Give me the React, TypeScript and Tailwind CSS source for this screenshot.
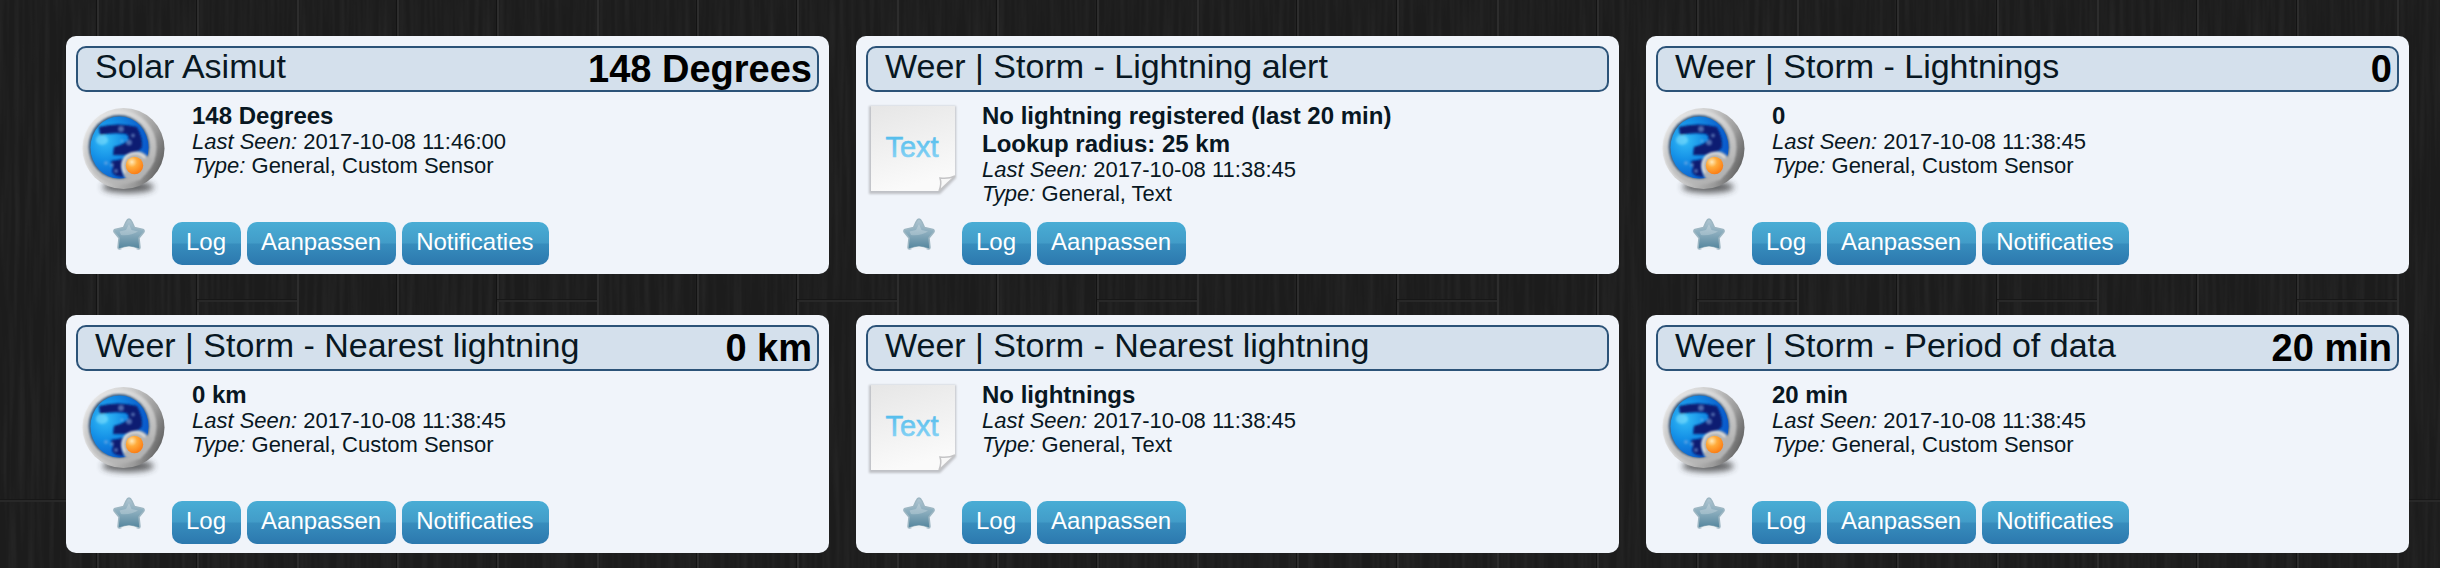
import React from "react";

type Kind = "custom" | "text";

interface Device {
  name: string;
  value?: string;
  status: string[];
  seen: string;
  type: string;
  kind: Kind;
}

const devices: Device[] = [
  { name: "Solar Asimut", value: "148 Degrees", status: ["148 Degrees"], seen: "2017-10-08 11:46:00", type: "General, Custom Sensor", kind: "custom" },
  { name: "Weer | Storm - Lightning alert", status: ["No lightning registered (last 20 min)", "Lookup radius: 25 km"], seen: "2017-10-08 11:38:45", type: "General, Text", kind: "text" },
  { name: "Weer | Storm - Lightnings", value: "0", status: ["0"], seen: "2017-10-08 11:38:45", type: "General, Custom Sensor", kind: "custom" },
  { name: "Weer | Storm - Nearest lightning", value: "0 km", status: ["0 km"], seen: "2017-10-08 11:38:45", type: "General, Custom Sensor", kind: "custom" },
  { name: "Weer | Storm - Nearest lightning", status: ["No lightnings"], seen: "2017-10-08 11:38:45", type: "General, Text", kind: "text" },
  { name: "Weer | Storm - Period of data", value: "20 min", status: ["20 min"], seen: "2017-10-08 11:38:45", type: "General, Custom Sensor", kind: "custom" },
];

function Defs() {
  return (
    <svg width="0" height="0" className="absolute" aria-hidden="true">
      <defs>
        <linearGradient id="ring" x1="0" y1="0.2" x2="1" y2="0.6">
          <stop offset="0" stopColor="#f0f0f0" />
          <stop offset="0.45" stopColor="#cccccc" />
          <stop offset="0.8" stopColor="#9a9a9a" />
          <stop offset="1" stopColor="#666666" />
        </linearGradient>
        <linearGradient id="face" x1="0.2" y1="0" x2="0.7" y2="1">
          <stop offset="0" stopColor="#e6e6e6" />
          <stop offset="0.5" stopColor="#c9c9c9" />
          <stop offset="1" stopColor="#aeaeae" />
        </linearGradient>
        <radialGradient id="sea" cx="0.25" cy="0.38" r="0.72">
          <stop offset="0" stopColor="#34bdf8" />
          <stop offset="0.45" stopColor="#148fe6" />
          <stop offset="1" stopColor="#0a5acb" />
        </radialGradient>
        <radialGradient id="sun" cx="0.35" cy="0.3" r="0.75">
          <stop offset="0" stopColor="#ffe9b8" />
          <stop offset="0.4" stopColor="#ffac3c" />
          <stop offset="1" stopColor="#fb7a12" />
        </radialGradient>
        <filter id="soft" x="-20%" y="-50%" width="140%" height="200%">
          <feGaussianBlur stdDeviation="3" />
        </filter>
        <filter id="blurS">
          <feGaussianBlur stdDeviation="0.8" />
        </filter>
        <linearGradient id="page" x1="0" y1="0" x2="0.3" y2="1">
          <stop offset="0" stopColor="#e6e6e6" />
          <stop offset="1" stopColor="#fafafa" />
        </linearGradient>
        <linearGradient id="letters" x1="0" y1="0" x2="0" y2="1">
          <stop offset="0" stopColor="#48b8ea" />
          <stop offset="1" stopColor="#90d6f6" />
        </linearGradient>
        <linearGradient id="star" x1="0" y1="0" x2="0" y2="1">
          <stop offset="0" stopColor="#b0c6d2" />
          <stop offset="0.5" stopColor="#87aabb" />
          <stop offset="1" stopColor="#53859d" />
        </linearGradient>
      </defs>
    </svg>
  );
}

function CustomIcon() {
  return (
    <svg viewBox="0 0 96 96" className="size-24" role="img" aria-label="Custom sensor">
      <ellipse cx="52" cy="83" rx="26" ry="6" fill="#333" opacity="0.75" filter="url(#soft)" />
      <ellipse cx="47.500" cy="44.500" rx="41" ry="40.500" fill="url(#ring)" />
      <ellipse cx="44" cy="43.500" rx="36.500" ry="37" fill="url(#face)" filter="url(#blurS)" />
      <ellipse cx="43" cy="43" rx="30.500" ry="32" fill="#3f5f80" filter="url(#blurS)" />
      <ellipse cx="43.500" cy="43.500" rx="29" ry="31" fill="url(#sea)" />
      <g filter="url(#blurS)">
        <path d="M23 23 Q42 18 61 23 Q67 34 66 43 Q62 50 50 51 L37 51 L38 43 Q46 41 52 37 Q54 32 50 30 Q38 28 24 31 Z" fill="#071a72" />
        <path d="M35 57 L48 55 Q44 64 48 73 L41 72 Q34 69 37 64 Z" fill="#071a72" />
        <ellipse cx="26" cy="36" rx="6" ry="5" fill="#7fdcfb" opacity="0.6" />
      </g>
      <g fill="#8fb4e6" opacity="0.5" filter="url(#blurS)">
        <circle cx="45" cy="25" r="3" />
        <circle cx="53" cy="38.500" r="3" />
        <circle cx="46" cy="37" r="1.500" />
        <circle cx="57" cy="31.500" r="2" />
        <circle cx="30" cy="59" r="2" />
        <circle cx="36" cy="61" r="2" />
        <circle cx="40" cy="67" r="2" />
      </g>
      <g filter="url(#blurS)">
        <path d="M58 48 Q66 46 71 52 L78 56 L64 76 L50 75 Q45 68 46 61 Q48 50 58 48 Z" fill="#b3b3b3" />
        <path d="M49 69 A12.500 12.500 0 0 1 69 54" fill="none" stroke="#dedede" strokeWidth="2.500" />
      </g>
      <circle cx="58.500" cy="61.500" r="8.700" fill="url(#sun)" />
    </svg>
  );
}

function TextIcon() {
  return (
    <svg viewBox="0 0 96 96" className="size-24" role="img" aria-label="Text">
      <path d="M3 2 H90 V74 L74 90 H3 Z" fill="#bfc1c6" filter="url(#blurS)" />
      <path d="M5 2 H89 V72 L73 87 H5 Z" fill="url(#page)" />
      <path d="M73 87 Q76 80 74 74 Q83 75 89 72 Z" fill="#f8f8f8" stroke="#c4c4c6" strokeWidth="1.500" />
      <text x="46" y="53" textAnchor="middle" fontFamily="Liberation Sans, sans-serif" fontSize="29" fill="url(#letters)" stroke="url(#letters)" strokeWidth="0.600">
        Text
      </text>
    </svg>
  );
}

function Star() {
  return (
    <svg viewBox="0 0 32 32" className="size-8" aria-hidden="true">
      <path d="M16 1 Q17.500 1 19 4 L21.500 9.500 L30 11.500 Q32 12.500 30.500 14.500 L26 20 L27 29.500 Q27 31 25.500 31 Q16 27 6.500 31 Q5 31 5 29.500 L6 20 L1.500 14.500 Q0 12.500 2 11.500 L10.500 9.500 L13 4 Q14.500 1 16 1 Z" fill="url(#star)" stroke="#9db6c2" strokeWidth="1.500" strokeLinejoin="round" />
      <path d="M7 31 Q16 26 25 31 Z" fill="#eef2f5" />
      <path d="M16 6 L18.500 12 L25 13.500 Q18 18 8 17 L6.500 13.500 L13 12 Z" fill="#fff" opacity="0.22" />
    </svg>
  );
}

function ActionButton({ children }: { children: React.ReactNode }) {
  return (
    <button
      type="button"
      className="flex h-[43px] cursor-pointer items-center rounded-[10px] bg-[linear-gradient(to_bottom,#49add5_0%,#429cc8_49%,#378dbd_51%,#2c78ae_100%)] pr-[15px] pb-1 pl-[14px] text-2xl text-white"
    >
      {children}
    </button>
  );
}

function DeviceCard({ device }: { device: Device }) {
  const custom = device.kind === "custom";
  return (
    <article className="flex min-h-[238px] flex-col rounded-[10px] bg-[#f0f4fa] p-[10px] pb-[9px] text-[#081722]">
      <header className="flex h-[46px] items-center justify-between rounded-[10px] border-2 border-[#2c5378] bg-[#d4e0ec] pr-[5px] pl-[17px]">
        <h2 className="pb-1.5 text-[34px] leading-[38px]">{device.name}</h2>
        {device.value && <strong className="text-[38px] leading-[42px] font-bold text-black">{device.value}</strong>}
      </header>
      <div className="flex flex-1 gap-5 pt-[10px]">
        <div className="-mb-5 h-24 w-24 shrink-0 pt-[2px]">{custom ? <CustomIcon /> : <TextIcon />}</div>
        <div>
          {device.status.map((line) => (
            <p key={line} className="text-2xl leading-7 font-bold">{line}</p>
          ))}
          <p className="text-[22px] leading-6"><i>Last Seen:</i> {device.seen}</p>
          <p className="text-[22px] leading-6"><i>Type:</i> {device.type}</p>
        </div>
      </div>
      <footer className="flex items-start gap-[6px] pl-[37px]">
        <button type="button" aria-label="Favoriet" className="-mt-1 mr-[21px] cursor-pointer">
          <Star />
        </button>
        <ActionButton>Log</ActionButton>
        <ActionButton>Aanpassen</ActionButton>
        {custom && <ActionButton>Notificaties</ActionButton>}
      </footer>
    </article>
  );
}

function Wood() {
  return (
    <svg className="absolute inset-0 h-full w-full" aria-hidden="true">
      <defs>
        <filter id="grain" x="0" y="0" width="100%" height="100%" colorInterpolationFilters="sRGB">
          <feTurbulence type="fractalNoise" baseFrequency="0.2 0.008" numOctaves="2" seed="4" />
          <feColorMatrix values="0 0 0 0 1  0 0 0 0 1  0 0 0 0 1  0.08 0 0 0 -0.03" />
        </filter>
        <pattern id="planks" width="300" height="600" x="-3" patternUnits="userSpaceOnUse">
          {[0, 100, 200].map((x) => (
            <g key={x}>
              <rect x={x - 1} width="1" height="600" fill="#131313" />
              <rect x={x} width="2" height="600" fill="#2d2d2d" />
            </g>
          ))}
          <rect x="200" y="299" width="100" height="1" fill="#171717" />
          <rect x="200" y="300" width="100" height="2" fill="#282828" />
          <rect x="0" y="499" width="100" height="1" fill="#171717" />
          <rect x="0" y="500" width="100" height="2" fill="#282828" />
        </pattern>
      </defs>
      <rect width="100%" height="100%" fill="#1c1c1c" />
      <rect width="100%" height="100%" filter="url(#grain)" />
      <rect width="100%" height="100%" fill="url(#planks)" />
    </svg>
  );
}

export default function App() {
  return (
    <div className="relative min-h-screen bg-[#1d1d1d] font-['Liberation_Sans',Arial,sans-serif]">
      <Wood />
      <Defs />
      <main className="relative grid grid-cols-3 gap-x-[27px] gap-y-[41px] pt-9 pr-[31px] pb-4 pl-[66px]">
        {devices.map((device, i) => (
          <DeviceCard key={i} device={device} />
        ))}
      </main>
    </div>
  );
}
